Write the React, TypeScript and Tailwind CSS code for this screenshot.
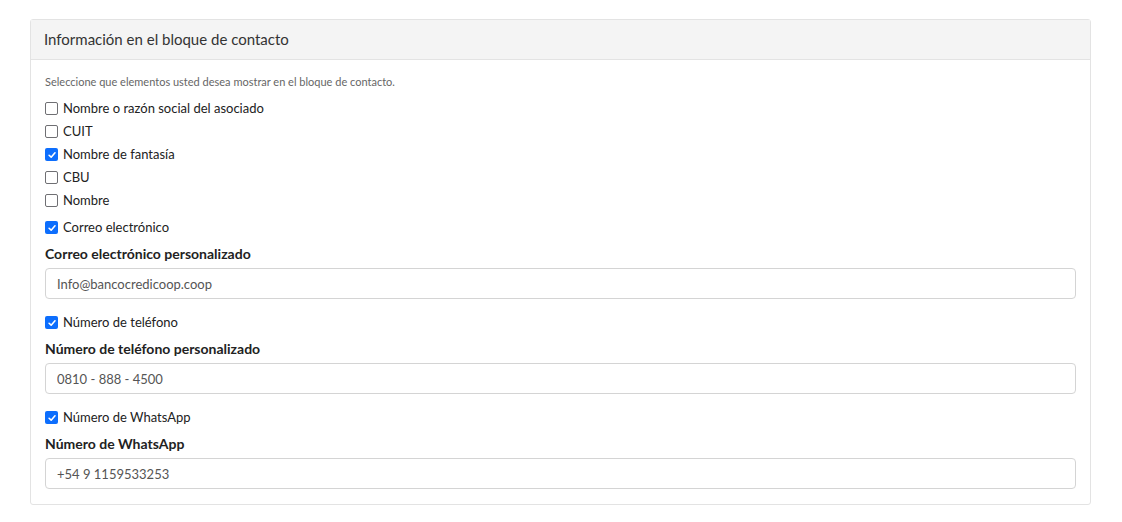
import { useState } from "react";

interface CheckProps {
  label: string;
  checked: boolean;
  onToggle: () => void;
}

function CheckRow({ label, checked, onToggle }: CheckProps) {
  return (
    <label className="flex h-[23px] items-center gap-[5px] cursor-pointer select-none">
      <span
        onClick={onToggle}
        className={
          checked
            ? "flex h-[13px] w-[13px] items-center justify-center rounded-[2px] bg-[#0d6efd]"
            : "h-[13px] w-[13px] rounded-[2px] border-[1.5px] border-[#6f6f73] bg-white"
        }
      >
        {checked && (
          <svg viewBox="0 0 12 12" className="h-[10px] w-[10px]">
            <path
              d="M2.5 6.3 L5 8.6 L9.6 3.4"
              fill="none"
              stroke="white"
              strokeWidth="1.9"
              strokeLinecap="round"
              strokeLinejoin="round"
            />
          </svg>
        )}
      </span>
      <span className="text-[13px] text-[#222]">{label}</span>
    </label>
  );
}

function Field({ label, value }: { label: string; value: string }) {
  return (
    <div className="mt-[5px]">
      <div className="h-[20px] text-[14px] font-bold leading-[20px] text-[#222]">{label}</div>
      <input
        readOnly
        value={value}
        className="mt-[4px] h-[31px] w-full rounded-[4px] border border-[#d4d4d4] px-[11px] text-[13px] text-[#555] outline-none"
      />
    </div>
  );
}

export default function App() {
  const [checks, setChecks] = useState({
    razon: false,
    cuit: false,
    fantasia: true,
    cbu: false,
    nombre: false,
    correo: true,
    telefono: true,
    whatsapp: true,
  });

  const toggle = (k: keyof typeof checks) => setChecks((c) => ({ ...c, [k]: !c[k] }));

  return (
    <div className="min-h-[522px] bg-white pt-[19px] font-['Lato','Noto_Sans',sans-serif]">
      <div className="ml-[30px] w-[1061px] rounded-[3px] border border-[#e3e3e3]">
        <div className="flex h-[40px] items-center border-b border-[#e3e3e3] bg-[#f4f4f4] px-[13px] text-[15px] text-[#333]">
          Información en el bloque de contacto
        </div>
        <div className="px-[14px] pb-[15px] pt-[15px]">
          <p className="text-[11px] leading-[14px] text-[#666]">
            Seleccione que elementos usted desea mostrar en el bloque de contacto.
          </p>
          <div className="mt-[8px]">
            <CheckRow label="Nombre o razón social del asociado" checked={checks.razon} onToggle={() => toggle("razon")} />
            <CheckRow label="CUIT" checked={checks.cuit} onToggle={() => toggle("cuit")} />
            <CheckRow label="Nombre de fantasía" checked={checks.fantasia} onToggle={() => toggle("fantasia")} />
            <CheckRow label="CBU" checked={checks.cbu} onToggle={() => toggle("cbu")} />
            <CheckRow label="Nombre" checked={checks.nombre} onToggle={() => toggle("nombre")} />
          </div>
          <div className="mt-[4px]">
            <CheckRow label="Correo electrónico" checked={checks.correo} onToggle={() => toggle("correo")} />
            <Field label="Correo electrónico personalizado" value="Info@bancocredicoop.coop" />
          </div>
          <div className="mt-[12px]">
            <CheckRow label="Número de teléfono" checked={checks.telefono} onToggle={() => toggle("telefono")} />
            <Field label="Número de teléfono personalizado" value="0810 - 888 - 4500" />
          </div>
          <div className="mt-[12px]">
            <CheckRow label="Número de WhatsApp" checked={checks.whatsapp} onToggle={() => toggle("whatsapp")} />
            <Field label="Número de WhatsApp" value="+54 9 1159533253" />
          </div>
        </div>
      </div>
    </div>
  );
}
